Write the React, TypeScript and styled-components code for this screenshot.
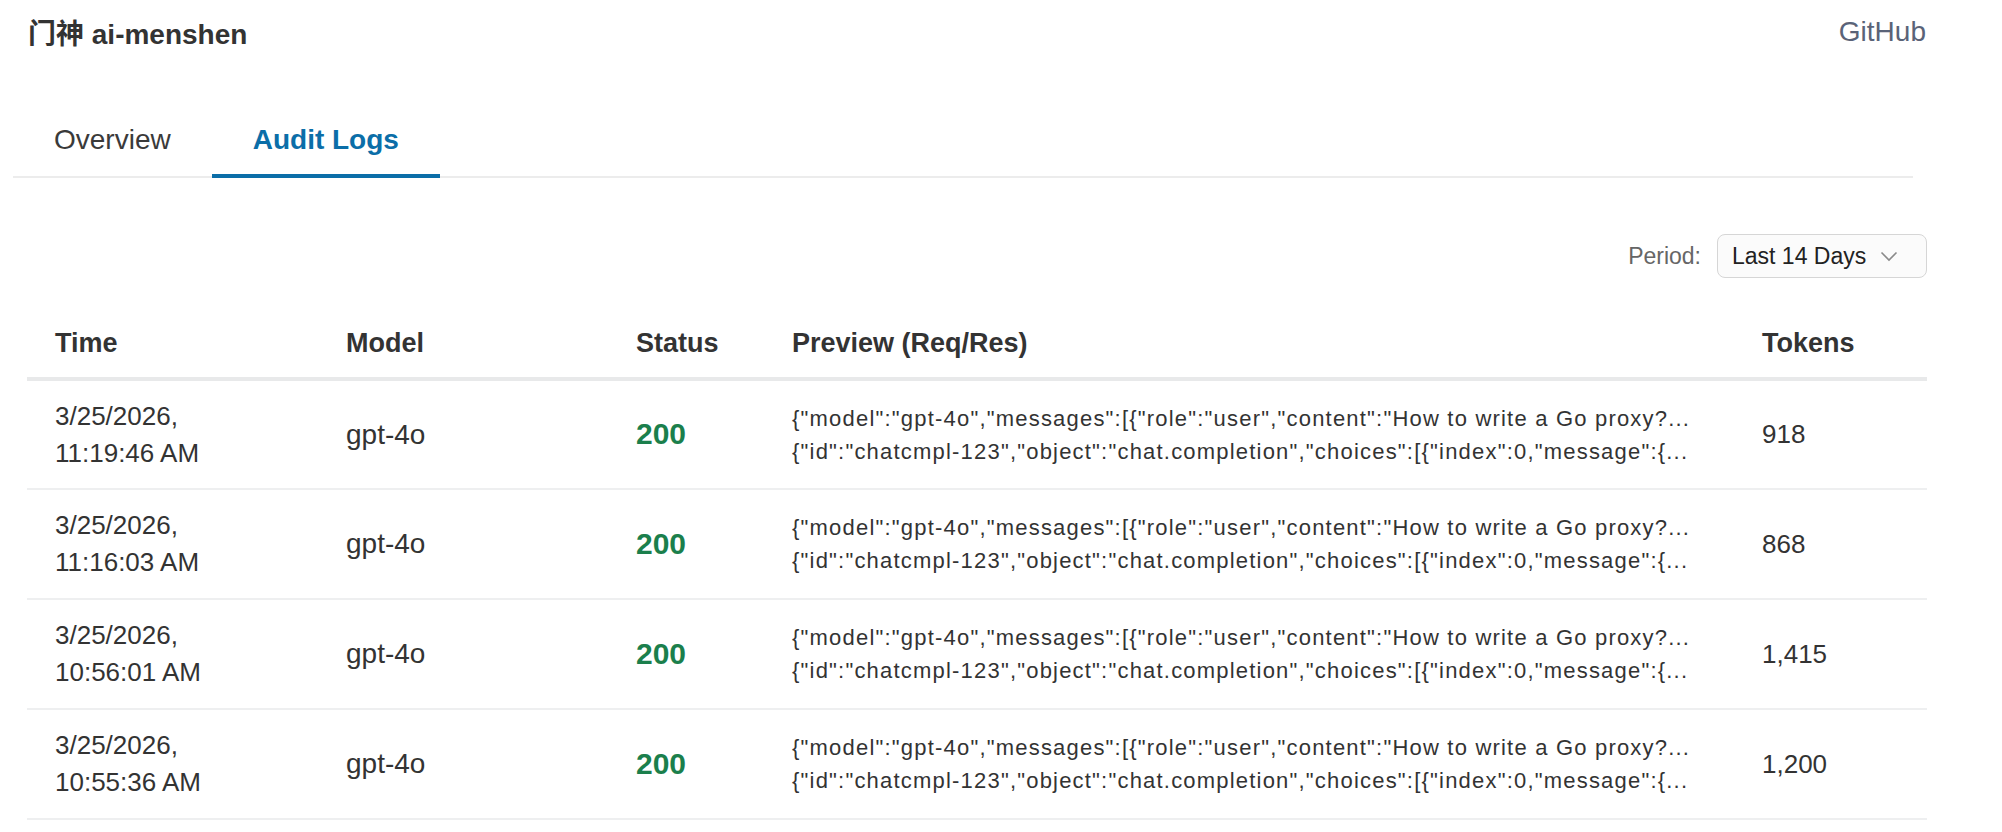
import styled, { createGlobalStyle } from "styled-components";

const GlobalStyle = createGlobalStyle`
  html, body {
    margin: 0;
    padding: 0;
    background: #ffffff;
  }
  body {
    font-family: "Liberation Sans", "Noto Sans CJK SC", Arial, sans-serif;
    color: #333333;
  }
  * {
    box-sizing: border-box;
  }
`;

type LogRow = {
  date: string;
  time: string;
  model: string;
  status: number;
  req: string;
  res: string;
  tokens: string;
};

const REQ = '{"model":"gpt-4o","messages":[{"role":"user","content":"How to write a Go proxy?...';
const RES = '{"id":"chatcmpl-123","object":"chat.completion","choices":[{"index":0,"message":{...';

const rows: LogRow[] = [
  { date: "3/25/2026,", time: "11:19:46 AM", model: "gpt-4o", status: 200, req: REQ, res: RES, tokens: "918" },
  { date: "3/25/2026,", time: "11:16:03 AM", model: "gpt-4o", status: 200, req: REQ, res: RES, tokens: "868" },
  { date: "3/25/2026,", time: "10:56:01 AM", model: "gpt-4o", status: 200, req: REQ, res: RES, tokens: "1,415" },
  { date: "3/25/2026,", time: "10:55:36 AM", model: "gpt-4o", status: 200, req: REQ, res: RES, tokens: "1,200" },
];

const columns = [
  { label: "Time", width: 291 },
  { label: "Model", width: 290 },
  { label: "Status", width: 156 },
  { label: "Preview (Req/Res)", width: 970 },
  { label: "Tokens", width: 193 },
];

const App = () => {
  return (
    <>
      <GlobalStyle />
      <Header>
        <Brand>门神 ai-menshen</Brand>
        <HeaderLink href="#">GitHub</HeaderLink>
      </Header>

      <TabBar>
        <Tab>Overview</Tab>
        <Tab $active>Audit Logs</Tab>
      </TabBar>

      <Toolbar>
        <FilterLabel>Period:</FilterLabel>
        <Select>
          <span>Last 14 Days</span>
          <svg width="18" height="11" viewBox="0 0 18 11" fill="none">
            <polyline points="1.5,1.5 9,9 16.5,1.5" stroke="#8a8a8a" strokeWidth="1.6" />
          </svg>
        </Select>
      </Toolbar>

      <Table>
        <colgroup>
          {columns.map((c) => (
            <col key={c.label} style={{ width: c.width }} />
          ))}
        </colgroup>
        <thead>
          <tr>
            {columns.map((c) => (
              <Th key={c.label}>{c.label}</Th>
            ))}
          </tr>
        </thead>
        <tbody>
          {rows.map((r) => (
            <tr key={r.time}>
              <Td>
                <TimeLine>{r.date}</TimeLine>
                <TimeLine>{r.time}</TimeLine>
              </Td>
              <Td>
                <Model>{r.model}</Model>
              </Td>
              <Td>
                <Status $ok={r.status < 400}>{r.status}</Status>
              </Td>
              <Td>
                <Preview>{r.req}</Preview>
                <Preview>{r.res}</Preview>
              </Td>
              <Td>{r.tokens}</Td>
            </tr>
          ))}
        </tbody>
      </Table>
    </>
  );
};

export default App;

const Header = styled.header`
  display: flex;
  align-items: center;
  justify-content: space-between;
  height: 64px;
  padding: 0 76px 0 28px;
`;

const Brand = styled.div`
  font-size: 28px;
  font-weight: 700;
  color: #333333;
`;

const HeaderLink = styled.a`
  font-size: 28px;
  color: #5a6378;
  text-decoration: none;
`;

const TabBar = styled.nav`
  display: flex;
  margin: 38px 89px 0 13px;
  border-bottom: 2px solid #ececec;
`;

const Tab = styled.div<{ $active?: boolean }>`
  display: flex;
  align-items: center;
  height: 76px;
  padding: 4px 41px 0;
  font-size: 28px;
  font-weight: ${(p) => (p.$active ? 700 : 400)};
  color: ${(p) => (p.$active ? "#0b6ea8" : "#3a3a3a")};
  border-bottom: 4px solid ${(p) => (p.$active ? "#0b6ea8" : "transparent")};
  margin-bottom: -2px;
`;

const Toolbar = styled.div`
  display: flex;
  justify-content: flex-end;
  align-items: center;
  gap: 16px;
  margin-top: 56px;
  padding-right: 75px;
`;

const FilterLabel = styled.span`
  font-size: 23px;
  color: #666666;
`;

const Select = styled.div`
  display: flex;
  align-items: center;
  justify-content: space-between;
  width: 210px;
  height: 44px;
  padding: 0 28px 0 14px;
  border: 1.5px solid #d6d6d6;
  border-radius: 8px;
  background: #fbfbfb;
  font-size: 23px;
  color: #222222;
`;

const Table = styled.table`
  width: 1900px;
  margin: 31px 0 0 27px;
  border-collapse: collapse;
  table-layout: fixed;
`;

const Th = styled.th`
  height: 70px;
  padding: 0 28px;
  text-align: left;
  font-size: 27px;
  font-weight: 700;
  color: #333333;
  border-bottom: 4px solid #e8e9ea;
`;

const Td = styled.td`
  height: 110px;
  padding: 0 28px;
  font-size: 26px;
  line-height: 37px;
  color: #333333;
  vertical-align: middle;
  border-bottom: 2px solid #eeeff0;
`;

const TimeLine = styled.div`
  white-space: nowrap;
`;

const Model = styled.span`
  font-size: 28px;
`;

const Status = styled.span<{ $ok: boolean }>`
  font-size: 30px;
  font-weight: 700;
  color: ${(p) => (p.$ok ? "#1b7f4c" : "#c0392b")};
`;

const Preview = styled.div`
  font-size: 22px;
  line-height: 33px;
  letter-spacing: 1.2px;
  white-space: nowrap;
`;
